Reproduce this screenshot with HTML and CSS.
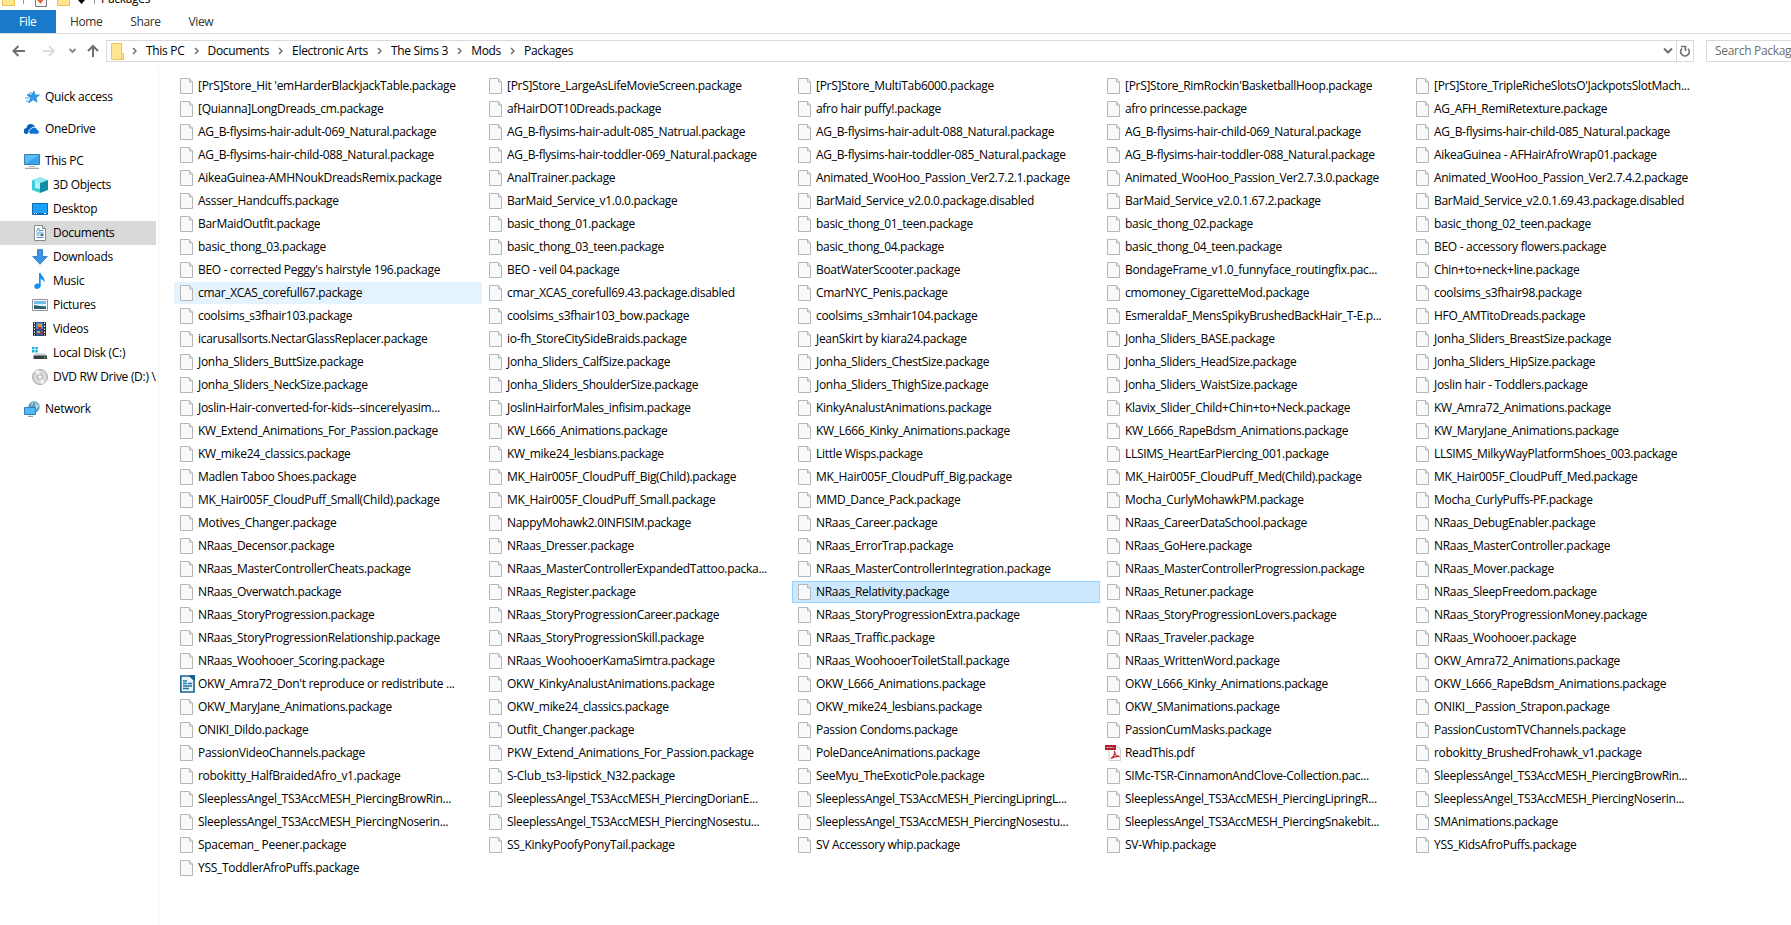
FILE: index.html
```html
<html>
    <head>
        <meta charset="utf-8">
        <meta name="viewport" content="width=device-width">
        <title>Packages</title>
        <link rel="stylesheet" href="styles.css">
    </head>
    <body>
        <div class="titlebar">
            <svg class="bar-icon" width="14" height="18" viewBox="0 0 14 18"><path d="M.5.5h10v10h2v7H.5z" fill="#ffe591" stroke="#e8c04c"/></svg>
            <span class="bar-sep"></span>
            <svg class="bar-icon check" width="12" height="18" viewBox="0 0 12 18"><path d="M.5.5h11v17H.5z" fill="#f7f9fb" stroke="#777"/><path d="M2.5 10l3 3 3.5-5" fill="none" stroke="#e8622c" stroke-width="2.2"/></svg>
            <svg class="bar-icon new" width="14" height="18" viewBox="0 0 14 18"><path d="M.5.5h10v10h2v7H.5z" fill="#ffe591" stroke="#e8c04c"/></svg>
            <svg class="bar-arrow" width="7" height="4" viewBox="0 0 7 4"><path d="M0 0h7L3.5 4z" fill="#000"/></svg>
            <span class="bar-sep"></span>
            <span class="title">Packages</span>
        </div>

        <div class="tabs">
            <span class="tab file">File</span>
            <span class="tab">Home</span>
            <span class="tab">Share</span>
            <span class="tab">View</span>
        </div>

        <div class="nav">
            <div class="arrows">
                <svg width="90" height="22" viewBox="0 0 90 22" fill="none" stroke-width="2">
                    <path d="M13.5 11H25M18.5 6l-5 5 5 5" stroke="#6f6f6f"/>
                    <path d="M43 11h11M49 6l5 5-5 5" stroke="#dcdcdc"/>
                    <path d="M69.5 9l3 3 3-3" stroke="#858585" stroke-width="1.8"/>
                </svg>
                <svg width="16" height="22" viewBox="0 0 16 22" fill="none" stroke="#6f6f6f" stroke-width="2"><path d="M3 17V6M-2 11l5-5 5 5"/></svg>
            </div>
            <div class="address">
                <svg class="folder" width="14" height="17" viewBox="0 0 14 17"><path d="M.5.5h10v10h2v6H.5z" fill="#ffe591" stroke="#edc658"/><path d="M10.500 10v6" stroke="#edc658"/></svg>
                <div class="crumbs" id="crumbs"></div>
                <svg class="drop" width="10" height="8" viewBox="0 0 10 8"><path d="M1 1.500l4 4 4-4" fill="none" stroke="#6f6f6f" stroke-width="2"/></svg>
                <div class="refresh"><svg width="12" height="13" viewBox="0 0 12 13" fill="none" stroke="#6f6f6f" stroke-width="1.700"><path d="M3 3.500a4.300 4.300 0 1 0 6.200.3"/><path d="M2 1.500h4.500V6"/></svg></div>
            </div>
            <div class="search">Search Packages</div>
        </div>

        <div class="main">
            <div class="sidebar">
                <div class="side top"><svg width="16" height="16" viewBox="0 0 16 16"><path d="M10 2l1.200 3.900 4.300.1-3.500 2.700 1 4.500-3.700-2.500-4 2.800 1.200-4.700L3.300 6.200l4.400-.4z" fill="#2f9be8" stroke="#1878c8" stroke-width=".6"/><path d="M5 4h3M3 5.500h3M1 9h4M2 12h3M4 13.500h2" stroke="#3d9fe2"/></svg>Quick access</div>
                <div class="side top"><svg width="16" height="16" viewBox="0 0 16 16"><path d="M3 13a3 3 0 0 1-.5-6A4.500 4.500 0 0 1 11 5.500L7 9z" fill="#0a5fc0"/><path d="M6.500 13.200a2.600 2.600 0 0 1 .2-5 3.600 3.600 0 0 1 6.800.6 2.300 2.300 0 0 1 .4 4.400z" fill="#0f74d8" stroke="#fff" stroke-width=".9"/></svg>OneDrive</div>
                <div class="side top"><svg width="16" height="16" viewBox="0 0 16 16"><path d="M.5 1.500h15v10H.5z" fill="#5bbcf8" stroke="#3d7fa8"/><path d="M1 11L15 2v9z" fill="#38a3ee"/><path d="M5 13.500h6" stroke="#a9b9c5"/><path d="M1 15.300h14" stroke="#8194a5"/></svg>This PC</div>
                <div class="side"><svg width="16" height="16" viewBox="0 0 16 16"><path d="M0 3l8-3 8 3-8 3z" fill="#8eeaf0"/><path d="M0 3l8 3v10l-8-3z" fill="#3ccbd8"/><path d="M16 3L8 6v10l8-3z" fill="#128fa5"/><path d="M3 4l5 2v6l-5-1z" fill="#b5f1f2"/></svg>3D Objects</div>
                <div class="side"><svg width="16" height="16" viewBox="0 0 16 16"><path d="M.5 2.500h15v11H.5z" fill="#1ba1fb" stroke="#1169ad"/><path d="M1 12.500h14" stroke="#0a6cb8"/><path d="M2 12.500h1M4 12.500h1M12 12.500h2" stroke="#fff"/></svg>Desktop</div>
                <div class="side current"><svg width="16" height="16" viewBox="0 0 16 16"><path d="M2.500.5h8l3 3v12h-11z" fill="#fff" stroke="#8b8b8b"/><path d="M10.500.5v3h3" fill="#ddd" stroke="#8b8b8b"/><path d="M4.500 6.500L6.500 3l1.300 3.500M8 5.500h3.500M4.500 8h7M4.500 10h3M4.500 12.500h7" fill="none" stroke="#3a92d0"/><path d="M8.500 10h3" stroke="#437b58" stroke-width="2"/></svg>Documents</div>
                <div class="side"><svg width="16" height="16" viewBox="0 0 16 16"><path d="M5.500.5h5v7h4.800L8 15.300.7 7.500h4.800z" fill="#3d96e5" stroke="#2577bf" stroke-width=".8"/></svg>Downloads</div>
                <div class="side"><svg width="16" height="16" viewBox="0 0 16 16"><path d="M7 0h1.700c.3 3 5.200 4.500 3.500 10-.2-2.600-1.700-3.500-3.500-4v6.500A3.300 2.700-20 1 1 7 10.600z" fill="#1194f2"/></svg>Music</div>
                <div class="side"><svg width="16" height="16" viewBox="0 0 16 16"><path d="M.5 2.500h15v11H.5z" fill="#fff" stroke="#929292"/><path d="M2 4h12v8H2z" fill="#72bdf0"/><path d="M2 7h12v2H2z" fill="#e4f2f2"/><path d="M2 8l4 .7 8 1V12H2z" fill="#27616f"/></svg>Pictures</div>
                <div class="side"><svg width="16" height="16" viewBox="0 0 16 16"><path d="M1 1h13v14H1z" fill="#303030"/><path d="M4 1.500h7V8H4z" fill="#4689d8"/><path d="M4 8.500h7v6H4z" fill="#335cae"/><path d="M6 3h4v3H6zM5 10h3v2H5z" fill="#e19b28"/><path d="M6 6h3v2H6zM8 11h3v2H8z" fill="#ae3732"/><path d="M2.500 1.500v13M12.500 1.500v13" stroke="#fff" stroke-dasharray="1.500 1.500"/></svg>Videos</div>
                <div class="side"><svg width="16" height="16" viewBox="0 0 16 16"><path d="M0 2h2.500v2.300H0zM3.300 2h2.500v2.300H3.300zM0 5.100h2.500v2.300H0zM3.300 5.100h2.500v2.300H3.300z" fill="#12b4ea"/><path d="M3.500 8.500H13l2 2H1.500z" fill="#c9c9c9"/><path d="M1.500 10.500H15V14H1.500z" fill="#3a3e40"/><path d="M12 12.300h1.500" stroke="#56e070"/></svg>Local Disk (C:)</div>
                <div class="side"><svg width="16" height="16" viewBox="0 0 16 16"><circle cx="8" cy="8" r="7.500" fill="#d6d8d9" stroke="#a4a6a8"/><path d="M8 8L3 2.500A7 7 0 0 1 7 1zM8 8l5 5.500A7 7 0 0 1 9 15z" fill="#f5f5f5"/><circle cx="8" cy="8" r="2.300" fill="#fff" stroke="#a4a6a8"/></svg>DVD RW Drive (D:) \</div>
                <div class="side top last"><svg width="16" height="16" viewBox="0 0 16 16"><circle cx="10" cy="6" r="5.700" fill="#5f9cbd"/><path d="M8 1c2 1 1 3-1 4M11 1l4 4-3 4z" fill="#b9dce9"/><path d="M.5 6.500h11v7H.5z" fill="#4fb8f6" stroke="#2f7eb4"/><path d="M4 15.300h5" stroke="#6d8797"/></svg>Network</div>
            </div>

            <div class="files" id="files"></div>
        </div>

        <script>
            var d = document;
            var crumbs = ["This PC", "Documents", "Electronic Arts", "The Sims 3", "Mods", "Packages"];
            var chevron = '<svg width="5" height="8" viewBox="0 0 5 8"><path d="M1 1l3 3-3 3" fill="none" stroke="#707070" stroke-width="1.5"/></svg>';
            d.getElementById("crumbs").innerHTML = crumbs.map(function(c) {
                return chevron + '<span>' + c + '</span>';
            }).join('');

            //File names, left to right and then down
            var names = [
                "[PrS]Store_Hit 'emHarderBlackjackTable.package", "[PrS]Store_LargeAsLifeMovieScreen.package", "[PrS]Store_MultiTab6000.package", "[PrS]Store_RimRockin'BasketballHoop.package", "[PrS]Store_TripleRicheSlotsO'JackpotsSlotMach...",
                "[Quianna]LongDreads_cm.package", "afHairDOT10Dreads.package", "afro hair puffy!.package", "afro princesse.package", "AG_AFH_RemiRetexture.package",
                "AG_B-flysims-hair-adult-069_Natural.package", "AG_B-flysims-hair-adult-085_Natrual.package", "AG_B-flysims-hair-adult-088_Natural.package", "AG_B-flysims-hair-child-069_Natural.package", "AG_B-flysims-hair-child-085_Natural.package",
                "AG_B-flysims-hair-child-088_Natural.package", "AG_B-flysims-hair-toddler-069_Natural.package", "AG_B-flysims-hair-toddler-085_Natural.package", "AG_B-flysims-hair-toddler-088_Natural.package", "AikeaGuinea - AFHairAfroWrap01.package",
                "AikeaGuinea-AMHNoukDreadsRemix.package", "AnalTrainer.package", "Animated_WooHoo_Passion_Ver2.7.2.1.package", "Animated_WooHoo_Passion_Ver2.7.3.0.package", "Animated_WooHoo_Passion_Ver2.7.4.2.package",
                "Assser_Handcuffs.package", "BarMaid_Service_v1.0.0.package", "BarMaid_Service_v2.0.0.package.disabled", "BarMaid_Service_v2.0.1.67.2.package", "BarMaid_Service_v2.0.1.69.43.package.disabled",
                "BarMaidOutfit.package", "basic_thong_01.package", "basic_thong_01_teen.package", "basic_thong_02.package", "basic_thong_02_teen.package",
                "basic_thong_03.package", "basic_thong_03_teen.package", "basic_thong_04.package", "basic_thong_04_teen.package", "BEO - accessory flowers.package",
                "BEO - corrected Peggy's hairstyle 196.package", "BEO - veil 04.package", "BoatWaterScooter.package", "BondageFrame_v1.0_funnyface_routingfix.pac...", "Chin+to+neck+line.package",
                "cmar_XCAS_corefull67.package", "cmar_XCAS_corefull69.43.package.disabled", "CmarNYC_Penis.package", "cmomoney_CigaretteMod.package", "coolsims_s3fhair98.package",
                "coolsims_s3fhair103.package", "coolsims_s3fhair103_bow.package", "coolsims_s3mhair104.package", "EsmeraldaF_MensSpikyBrushedBackHair_T-E.p...", "HFO_AMTitoDreads.package",
                "icarusallsorts.NectarGlassReplacer.package", "io-fh_StoreCitySideBraids.package", "JeanSkirt by kiara24.package", "Jonha_Sliders_BASE.package", "Jonha_Sliders_BreastSize.package",
                "Jonha_Sliders_ButtSize.package", "Jonha_Sliders_CalfSize.package", "Jonha_Sliders_ChestSize.package", "Jonha_Sliders_HeadSize.package", "Jonha_Sliders_HipSize.package",
                "Jonha_Sliders_NeckSize.package", "Jonha_Sliders_ShoulderSize.package", "Jonha_Sliders_ThighSize.package", "Jonha_Sliders_WaistSize.package", "Joslin hair - Toddlers.package",
                "Joslin-Hair-converted-for-kids--sincerelyasim...", "JoslinHairforMales_infisim.package", "KinkyAnalustAnimations.package", "Klavix_Slider_Child+Chin+to+Neck.package", "KW_Amra72_Animations.package",
                "KW_Extend_Animations_For_Passion.package", "KW_L666_Animations.package", "KW_L666_Kinky_Animations.package", "KW_L666_RapeBdsm_Animations.package", "KW_MaryJane_Animations.package",
                "KW_mike24_classics.package", "KW_mike24_lesbians.package", "Little Wisps.package", "LLSIMS_HeartEarPiercing_001.package", "LLSIMS_MilkyWayPlatformShoes_003.package",
                "Madlen Taboo Shoes.package", "MK_Hair005F_CloudPuff_Big(Child).package", "MK_Hair005F_CloudPuff_Big.package", "MK_Hair005F_CloudPuff_Med(Child).package", "MK_Hair005F_CloudPuff_Med.package",
                "MK_Hair005F_CloudPuff_Small(Child).package", "MK_Hair005F_CloudPuff_Small.package", "MMD_Dance_Pack.package", "Mocha_CurlyMohawkPM.package", "Mocha_CurlyPuffs-PF.package",
                "Motives_Changer.package", "NappyMohawk2.0INFISIM.package", "NRaas_Career.package", "NRaas_CareerDataSchool.package", "NRaas_DebugEnabler.package",
                "NRaas_Decensor.package", "NRaas_Dresser.package", "NRaas_ErrorTrap.package", "NRaas_GoHere.package", "NRaas_MasterController.package",
                "NRaas_MasterControllerCheats.package", "NRaas_MasterControllerExpandedTattoo.packa...", "NRaas_MasterControllerIntegration.package", "NRaas_MasterControllerProgression.package", "NRaas_Mover.package",
                "NRaas_Overwatch.package", "NRaas_Register.package", "NRaas_Relativity.package", "NRaas_Retuner.package", "NRaas_SleepFreedom.package",
                "NRaas_StoryProgression.package", "NRaas_StoryProgressionCareer.package", "NRaas_StoryProgressionExtra.package", "NRaas_StoryProgressionLovers.package", "NRaas_StoryProgressionMoney.package",
                "NRaas_StoryProgressionRelationship.package", "NRaas_StoryProgressionSkill.package", "NRaas_Traffic.package", "NRaas_Traveler.package", "NRaas_Woohooer.package",
                "NRaas_Woohooer_Scoring.package", "NRaas_WoohooerKamaSimtra.package", "NRaas_WoohooerToiletStall.package", "NRaas_WrittenWord.package", "OKW_Amra72_Animations.package",
                "OKW_Amra72_Don't reproduce or redistribute ...", "OKW_KinkyAnalustAnimations.package", "OKW_L666_Animations.package", "OKW_L666_Kinky_Animations.package", "OKW_L666_RapeBdsm_Animations.package",
                "OKW_MaryJane_Animations.package", "OKW_mike24_classics.package", "OKW_mike24_lesbians.package", "OKW_SManimations.package", "ONIKI__Passion_Strapon.package",
                "ONIKI_Dildo.package", "Outfit_Changer.package", "Passion Condoms.package", "PassionCumMasks.package", "PassionCustomTVChannels.package",
                "PassionVideoChannels.package", "PKW_Extend_Animations_For_Passion.package", "PoleDanceAnimations.package", "ReadThis.pdf", "robokitty_BrushedFrohawk_v1.package",
                "robokitty_HalfBraidedAfro_v1.package", "S-Club_ts3-lipstick_N32.package", "SeeMyu_TheExoticPole.package", "SIMc-TSR-CinnamonAndClove-Collection.pac...", "SleeplessAngel_TS3AccMESH_PiercingBrowRin...",
                "SleeplessAngel_TS3AccMESH_PiercingBrowRin...", "SleeplessAngel_TS3AccMESH_PiercingDorianE...", "SleeplessAngel_TS3AccMESH_PiercingLipringL...", "SleeplessAngel_TS3AccMESH_PiercingLipringR...", "SleeplessAngel_TS3AccMESH_PiercingNoserin...",
                "SleeplessAngel_TS3AccMESH_PiercingNoserin...", "SleeplessAngel_TS3AccMESH_PiercingNosestu...", "SleeplessAngel_TS3AccMESH_PiercingNosestu...", "SleeplessAngel_TS3AccMESH_PiercingSnakebit...", "SMAnimations.package",
                "Spaceman_ Peener.package", "SS_KinkyPoofyPonyTail.package", "SV Accessory whip.package", "SV-Whip.package", "YSS_KidsAfroPuffs.package",
                "YSS_ToddlerAfroPuffs.package"
            ];

            var page = '<svg width="16" height="16" viewBox="0 0 16 16"><path d="M.5.5h9l3 3.500v11.500H.5z" fill="#f8f9fa" stroke="#b4b6b8"/><path d="M9.500.5V4h3" fill="#dfe1e3" stroke="#b4b6b8"/></svg>';
            var writer = '<svg width="18" height="18" viewBox="0 0 18 18"><path d="M.800 1h9l4.200 4v12H.8z" fill="#e9f2f7" stroke="#17628f" stroke-width="1.600"/><path d="M9 0h6v6z" fill="#17628f"/><path d="M3 6h4M3 8.500h4M3 11h9M3 13.500h6M8 8.500h4" stroke="#2275a5" stroke-width="1.300"/></svg>';
            var pdf = '<svg width="18" height="16" viewBox="0 0 18 16"><path d="M5 1h8.500l3 3v11.500H5z" fill="#fafafa" stroke="#ccc"/><path d="M1 0h11v5H1z" fill="#b3202a"/><path d="M2.500 2.500h7" stroke="#f2cdd0" stroke-dasharray="2 1"/><path d="M7 13.500c3-2 4-5 3.500-7.500 0 3 2 5.500 5 5.500-3-.5-6 .5-8.500 2z" fill="none" stroke="#c4262e" stroke-width="1.300"/></svg>';

            var files = d.getElementById("files");
            names.forEach(function(name) {
                var row = d.createElement('div');
                row.className = 'item';
                var icon = page;
                if (name.indexOf("OKW_Amra72_Don't") == 0) {
                    icon = writer;
                }
                else if (name == "ReadThis.pdf") {
                    icon = pdf;
                    row.classList.add('pdf');
                }
                if (name == "cmar_XCAS_corefull67.package") {
                    row.classList.add('hover');
                }
                if (name == "NRaas_Relativity.package") {
                    row.classList.add('selected');
                }
                row.innerHTML = icon;
                var label = d.createElement('span');
                label.textContent = name;
                row.appendChild(label);
                files.appendChild(row);
            });
        </script>
    </body>
</html>
```
FILE: styles.css
```css
* {
    box-sizing: border-box;
}
body {
    margin: 0;
    height: 925px;
    overflow: hidden;
    background-color: #fff;
    color: #000;
    font-family: "Open Sans", "Noto Sans", sans-serif;
    font-size: 12px;
    letter-spacing: -0.3px;
    line-height: 16px;
    white-space: nowrap;
}
svg {
    display: block;
    flex: none;
}

/* title bar and ribbon */
.titlebar {
    display: flex;
    align-items: flex-end;
    height: 10px;
    overflow: hidden;
    padding-left: 2px;
}
.bar-icon {
    margin-bottom: 4px;
}
.bar-sep {
    width: 1px;
    height: 16px;
    margin: 0 11px 6px 7px;
    background-color: #999;
}
.check {
    margin-bottom: 3px;
}
.new {
    margin-left: 10px;
}
.bar-arrow {
    margin: 0 2px 6px 7px;
}
.bar-arrow + .bar-sep {
    margin-right: 6px;
}
.title {
    margin-bottom: 3px;
}
.tabs {
    display: flex;
    height: 24px;
    border-bottom: 1px solid #dadbdc;
}
.tab {
    padding: 4px 14px 0 14px;
    color: #333;
    letter-spacing: -0.4px;
}
.file {
    width: 56px;
    padding-left: 19px;
    background-color: #1979ca;
    color: #fff;
}

/* address row */
.nav {
    display: flex;
    height: 34px;
    padding-top: 6px;
}
.arrows {
    display: flex;
    width: 106px;
    height: 22px;
}
.arrows svg {
    overflow: visible;
}
.address {
    display: flex;
    align-items: center;
    width: 1588px;
    height: 22px;
    border: 1px solid #d9d9d9;
    padding-left: 4px;
}
.crumbs {
    display: flex;
    align-items: center;
    flex: 1;
    padding-left: 7px;
}
.crumbs span {
    margin: 0 9px 0 9px;
}
.drop {
    margin-right: 3px;
}
.refresh {
    display: flex;
    align-items: center;
    justify-content: center;
    width: 17px;
    height: 20px;
    border-left: 1px solid #d9d9d9;
}
.search {
    flex: 1;
    height: 22px;
    margin-left: 12px;
    border: 1px solid #d9d9d9;
    border-right: none;
    padding: 2px 0 0 8px;
    color: #6d6d6d;
    overflow: hidden;
}

.main {
    display: flex;
    height: 857px;
}
.sidebar {
    width: 159px;
    padding-top: 9px;
    border-right: 1px solid #f3f3f3;
}
.side {
    display: flex;
    align-items: center;
    width: 156px;
    height: 24px;
    padding-left: 32px;
    overflow: hidden;
}
.side svg {
    margin-right: 5px;
}
.top {
    padding-left: 24px;
    margin-top: 8px;
}
.current {
    background-color: #d9d9d9;
}

/* file list */
.files {
    display: grid;
    grid-template-columns: repeat(5, 308px);
    grid-auto-rows: 22px;
    column-gap: 1px;
    row-gap: 1px;
    align-content: start;
    padding: 7px 0 0 15px;
}
.item {
    display: flex;
    align-items: center;
    padding-left: 6px;
    overflow: hidden;
}
.item svg[width="16"] {
    margin-right: 2px;
}
.item.pdf {
    padding-left: 3px;
}
.item.pdf svg {
    margin-right: 3px;
}
.hover {
    background-color: #e5f3ff;
}
.selected {
    border: 1px solid #99d1ff;
    padding-left: 5px;
    background-color: #cce8ff;
}
```
